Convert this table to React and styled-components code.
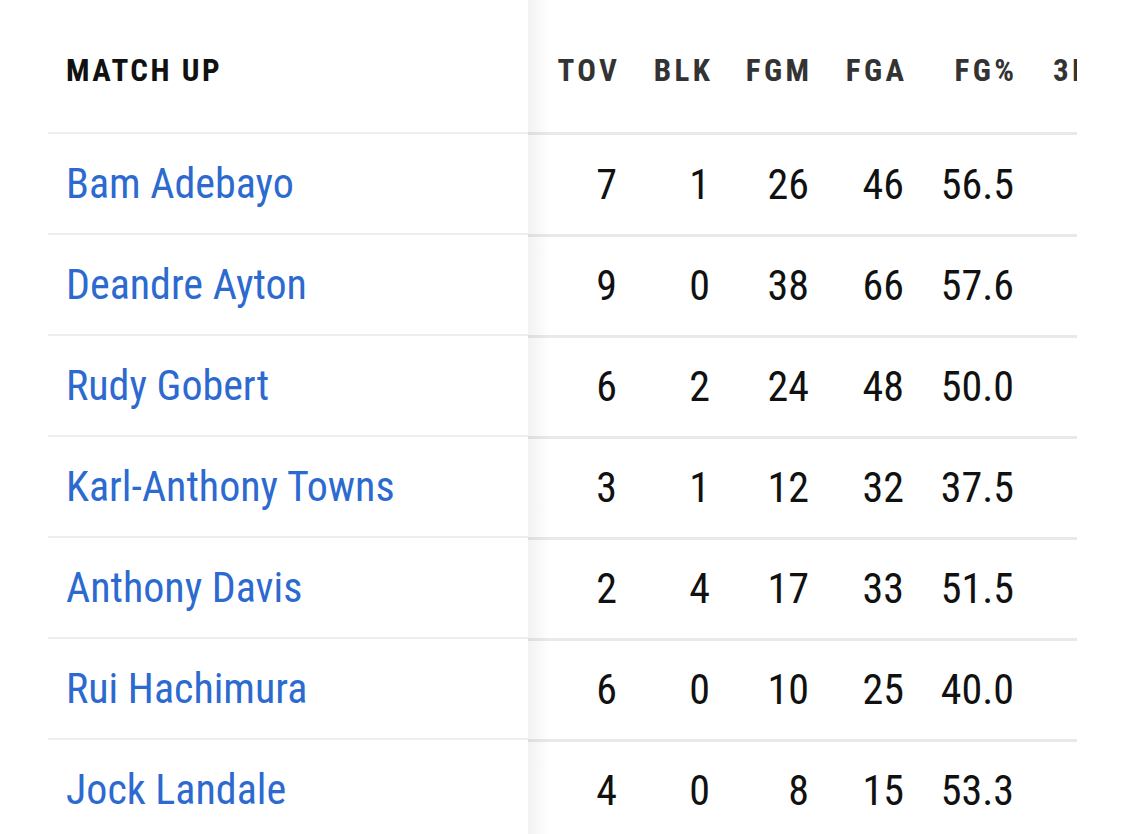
import React from "react";
import styled, { createGlobalStyle } from "styled-components";

const GlobalStyle = createGlobalStyle`
  html, body {
    margin: 0;
    padding: 0;
    background: #fff;
  }
  body {
    font-family: Roboto, "Liberation Sans", sans-serif;
    font-stretch: condensed;
    overflow: hidden;
  }
`;

const Page = styled.div`
  padding-left: 48px;
  width: 1125px;
  height: 834px;
  box-sizing: border-box;
  overflow: hidden;
`;

const Table = styled.div`
  display: flex;
  align-items: flex-start;
`;

const StickyCol = styled.div`
  position: relative;
  width: 480px;
  flex: none;
  z-index: 2;
  background: #fff;

  &::after {
    content: "";
    position: absolute;
    top: 0;
    bottom: 0;
    right: -22px;
    width: 22px;
    background: linear-gradient(to right, rgba(0, 0, 0, 0.05), rgba(0, 0, 0, 0));
  }
`;

const Scroller = styled.div`
  width: 549px;
  overflow: hidden;
  flex: none;
`;

const ScrollInner = styled.div`
  width: 700px;
`;

const HeadRow = styled.div`
  height: ${(p) => (p.$wide ? "135px" : "134px")};
  display: flex;
  align-items: center;
  padding-top: 8px;
  box-sizing: border-box;
  border-bottom: ${(p) => (p.$wide ? "3px solid #e9e9e9" : "2px solid #eeeeee")};
`;

const BodyRow = styled.div`
  height: 99px;
  display: flex;
  align-items: center;
  border-bottom: ${(p) => (p.$wide ? "3px solid #e9e9e9" : "2px solid #eeeeee")};
  margin-bottom: ${(p) => (p.$wide ? "-1px" : "0")};
`;

const MatchHead = styled.div`
  padding-left: 18px;
  font-size: 31px;
  font-weight: 700;
  letter-spacing: 2.5px;
  color: #111;
`;

const Name = styled.a`
  padding-left: 18px;
  font-size: 42px;
  color: #2c6ad0;
  text-decoration: none;
`;

const Cell = styled.div`
  width: ${(p) => p.$w}px;
  flex: none;
  box-sizing: border-box;
  padding-right: ${(p) => p.$pr}px;
  padding-left: ${(p) => p.$pl || 0}px;
  text-align: ${(p) => (p.$left ? "left" : "right")};
  white-space: nowrap;
`;

const HeadText = styled.span`
  font-size: 31px;
  font-weight: 700;
  letter-spacing: 3.4px;
  margin-right: -3.4px;
  color: #333;
`;

const Num = styled.span`
  font-size: 42px;
  color: #111;
`;

const columns = [
  { key: "tov", label: "TOV", w: 109, pr: 20 },
  { key: "blk", label: "BLK", w: 93, pr: 20 },
  { key: "fgm", label: "FGM", w: 99, pr: 20 },
  { key: "fga", label: "FGA", w: 95, pr: 20 },
  { key: "fgp", label: "FG%", w: 110, pr: 20 },
  { key: "tp", label: "3PM", w: 120, pr: 0, left: true, pl: 19 },
];

const players = [
  { name: "Bam Adebayo", tov: 7, blk: 1, fgm: 26, fga: 46, fgp: "56.5" },
  { name: "Deandre Ayton", tov: 9, blk: 0, fgm: 38, fga: 66, fgp: "57.6" },
  { name: "Rudy Gobert", tov: 6, blk: 2, fgm: 24, fga: 48, fgp: "50.0" },
  { name: "Karl-Anthony Towns", tov: 3, blk: 1, fgm: 12, fga: 32, fgp: "37.5" },
  { name: "Anthony Davis", tov: 2, blk: 4, fgm: 17, fga: 33, fgp: "51.5" },
  { name: "Rui Hachimura", tov: 6, blk: 0, fgm: 10, fga: 25, fgp: "40.0" },
  { name: "Jock Landale", tov: 4, blk: 0, fgm: 8, fga: 15, fgp: "53.3" },
];

export default function App() {
  return (
    <>
      <GlobalStyle />
      <Page>
        <Table>
          <StickyCol>
            <HeadRow>
              <MatchHead>MATCH UP</MatchHead>
            </HeadRow>
            {players.map((p) => (
              <BodyRow key={p.name}>
                <Name href="#">{p.name}</Name>
              </BodyRow>
            ))}
          </StickyCol>

          <Scroller>
            <ScrollInner>
              <HeadRow $wide>
                {columns.map((c) => (
                  <Cell key={c.key} $w={c.w} $pr={c.pr} $pl={c.pl} $left={c.left}>
                    <HeadText>{c.label}</HeadText>
                  </Cell>
                ))}
              </HeadRow>
              {players.map((p) => (
                <BodyRow $wide key={p.name}>
                  {columns.map((c) => (
                    <Cell key={c.key} $w={c.w} $pr={c.pr} $pl={c.pl} $left={c.left}>
                      <Num>{p[c.key] ?? ""}</Num>
                    </Cell>
                  ))}
                </BodyRow>
              ))}
            </ScrollInner>
          </Scroller>
        </Table>
      </Page>
    </>
  );
}
